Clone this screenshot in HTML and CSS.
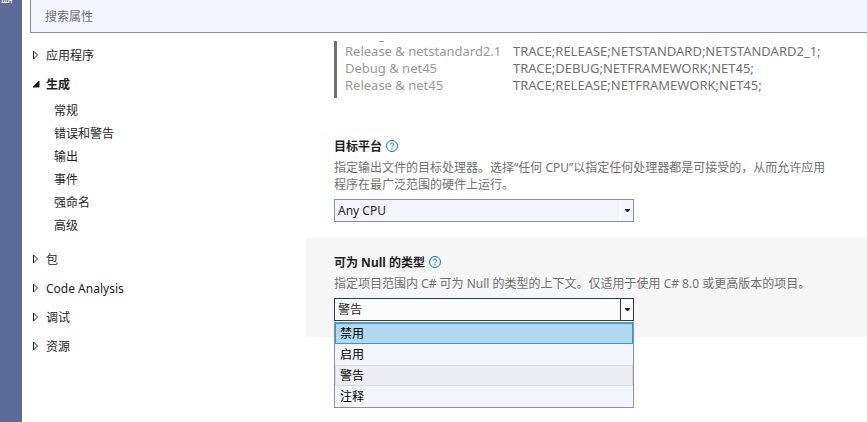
FILE: index.html
```
<!DOCTYPE html>
<html lang="zh-CN">
<head>
<meta charset="utf-8">
<title>项目属性</title>
<link rel="stylesheet" href="styles.css">
</head>
<body>
<aside class="rail"><button class="rail-tab" type="button">工具箱</button></aside>
<div class="designer">
  <input class="search" type="search" placeholder="搜索属性" aria-label="搜索属性">
  <div class="columns">
    <nav class="nav">
      <a class="nav-group" href="#application"><svg class="caret" viewBox="0 0 8 10"><path d="M1.5 1v8L5.5 5z"/></svg>应用程序</a>
      <a class="nav-group nav-current" href="#build"><svg class="caret caret-open" viewBox="0 0 8 10"><path d="M7 2v6H1z"/></svg>生成</a>
      <div class="nav-children">
        <a class="nav-item" href="#general">常规</a>
        <a class="nav-item" href="#errors">错误和警告</a>
        <a class="nav-item" href="#output">输出</a>
        <a class="nav-item" href="#events">事件</a>
        <a class="nav-item" href="#signing">强命名</a>
        <a class="nav-item" href="#advanced">高级</a>
      </div>
      <a class="nav-group" href="#package"><svg class="caret" viewBox="0 0 8 10"><path d="M1.5 1v8L5.5 5z"/></svg>包</a>
      <a class="nav-group" href="#analysis"><svg class="caret" viewBox="0 0 8 10"><path d="M1.5 1v8L5.5 5z"/></svg>Code Analysis</a>
      <a class="nav-group" href="#debug"><svg class="caret" viewBox="0 0 8 10"><path d="M1.5 1v8L5.5 5z"/></svg>调试</a>
      <a class="nav-group" href="#resources"><svg class="caret" viewBox="0 0 8 10"><path d="M1.5 1v8L5.5 5z"/></svg>资源</a>
    </nav>
    <main class="pane">
      <div class="symbols">
        <table class="symbol-table">
          <tr><th scope="row">Debug &amp; netstandard2.1</th><td>TRACE;DEBUG;NETSTANDARD;NETSTANDARD2_1;</td></tr>
          <tr><th scope="row">Release &amp; netstandard2.1</th><td>TRACE;RELEASE;NETSTANDARD;NETSTANDARD2_1;</td></tr>
          <tr><th scope="row">Debug &amp; net45</th><td>TRACE;DEBUG;NETFRAMEWORK;NET45;</td></tr>
          <tr><th scope="row">Release &amp; net45</th><td>TRACE;RELEASE;NETFRAMEWORK;NET45;</td></tr>
        </table>
      </div>
      <section class="property">
        <div class="title"><label for="platform">目标平台</label>
          <svg class="help" viewBox="0 0 12 12"><circle cx="6" cy="6" r="5.5"/><path d="M4.3 4.6C4.4 2.5 7.7 2.6 7.7 4.5 7.7 5.7 6 5.7 6 7.3M6 8.2v1.2"/></svg></div>
        <p class="description">指定输出文件的目标处理器。选择“任何 CPU”以指定任何处理器都是可接受的，从而允许应用程序在最广泛范围的硬件上运行。</p>
        <div class="combo">
          <select id="platform"><option>Any CPU</option><option>x86</option><option>x64</option></select>
          <span class="drop"><svg viewBox="0 0 5 3"><path d="M0 0h5v1L3 3H2L0 1z"/></svg></span>
        </div>
      </section>
      <section class="property property-active">
        <div class="title"><label for="nullable">可为 Null 的类型</label>
          <svg class="help" viewBox="0 0 12 12"><circle cx="6" cy="6" r="5.5"/><path d="M4.3 4.6C4.4 2.5 7.7 2.6 7.7 4.5 7.7 5.7 6 5.7 6 7.3M6 8.2v1.2"/></svg></div>
        <p class="description">指定项目范围内 C# 可为 Null 的类型的上下文。仅适用于使用 C# 8.0 或更高版本的项目。</p>
        <div class="combo combo-open">
          <select id="nullable"><option>禁用</option><option>启用</option><option selected>警告</option><option>注释</option></select>
          <span class="drop"><svg viewBox="0 0 5 3"><path d="M0 0h5v1L3 3H2L0 1z"/></svg></span>
          <ul class="menu" role="listbox" aria-label="可为 Null 的类型">
            <li class="choice choice-hover" role="option">禁用</li>
            <li class="choice" role="option">启用</li>
            <li class="choice choice-selected" role="option" aria-selected="true">警告</li>
            <li class="choice" role="option">注释</li>
          </ul>
        </div>
      </section>
    </main>
  </div>
</div>
</body>
</html>
```
FILE: styles.css
```
* { box-sizing: border-box; }

body {
  margin: 0;
  display: flex;
  min-height: 100vh;
  background: #fff;
  color: #1e1e1e;
  font: 12px/17px "Noto Sans", "Noto Sans CJK SC", sans-serif;
}

select, input, button { font: inherit; color: inherit; }

.rail {
  flex: 0 0 22px;
  background: #5d6b99;
  overflow: hidden;
}

.rail-tab {
  display: block;
  margin-top: -32px;
  padding: 0;
  border: 0;
  background: none;
  color: #fff;
  writing-mode: vertical-rl;
  text-orientation: sideways;
  line-height: 12px;
}

.designer {
  flex: 1;
  min-width: 0;
  padding-left: 8px;
}

.search {
  display: block;
  width: 100%;
  height: 33px;
  padding: 0 14px;
  border: 1px solid #8591a9;
  border-width: 0 0 1px 1px;
  border-radius: 0;
  background: #f2f5fd;
  outline: 0;
  appearance: none;
}

.search::placeholder { color: #717171; opacity: 1; }

.columns { display: flex; }

.nav {
  flex: 0 0 276px;
  padding-top: 8px;
}

.nav a {
  display: flex;
  align-items: center;
  color: inherit;
  text-decoration: none;
}

.nav-group { height: 29px; gap: 6px; padding-left: 2px; }
.nav-current { font-weight: 700; }
.nav-children { padding: 0 0 8px 24px; }
.nav-item { height: 23px; }

.caret {
  width: 8px;
  height: 10px;
  margin-bottom: 2px;
  fill: none;
  stroke: #1e1e1e;
}

.caret-open { fill: #1e1e1e; }

.pane {
  flex: 1;
  min-width: 0;
  padding-top: 8px;
}

.symbols {
  display: flex;
  flex-direction: column;
  justify-content: flex-end;
  height: 57px;
  margin: 0 28px 24px;
  padding: 0 0 4px 8px;
  border-left: 3px solid #717171;
  overflow: hidden;
}

.symbol-table {
  border-collapse: collapse;
  color: #717171;
  font-size: 13px;
}

.symbol-table th {
  width: 168px;
  padding: 0;
  color: #999;
  font-weight: 400;
  text-align: left;
  white-space: nowrap;
}

.symbol-table td { padding: 0; white-space: nowrap; }

.property { padding: 16px 28px; }
.property-active { background: #f6f6f6; }

.title {
  display: flex;
  align-items: center;
  gap: 4px;
  font-weight: 700;
}

.help {
  width: 12px;
  height: 12px;
  margin-bottom: 2px;
  fill: none;
  stroke: #0078c8;
}

.description {
  max-width: 500px;
  margin: 4px 0 6px;
  color: #717171;
}

.combo {
  position: relative;
  display: flex;
  width: 300px;
  max-width: 100%;
  height: 23px;
  border: 1px solid #8591a9;
  background: #f2f5fd;
}

.combo select {
  flex: 1;
  min-width: 0;
  padding: 0 3px;
  border: 0;
  background: none;
  outline: 0;
  appearance: none;
}

.drop {
  display: flex;
  align-items: center;
  justify-content: center;
  width: 13px;
  border-left: 1px solid #fff;
}

.drop svg { width: 5px; height: 3px; fill: #1e1e1e; }

.combo-open { border-color: #1f3b73; background: #fcfcfc; }
.combo-open .drop { border-color: #1f3b73; }

.menu {
  position: absolute;
  top: 23px;
  left: -1px;
  right: -1px;
  margin: 0;
  padding: 0;
  border: 1px solid #8591a9;
  background: #f2f5fd;
  color: #000;
  list-style: none;
}

.choice {
  height: 21px;
  padding: 1px 4px;
  border: 1px solid transparent;
}

.choice-hover { border-color: #26a0da; background: #b0d8f0; }
.choice-selected { border-color: #d9d9de; background: #ecedf1; }
```
